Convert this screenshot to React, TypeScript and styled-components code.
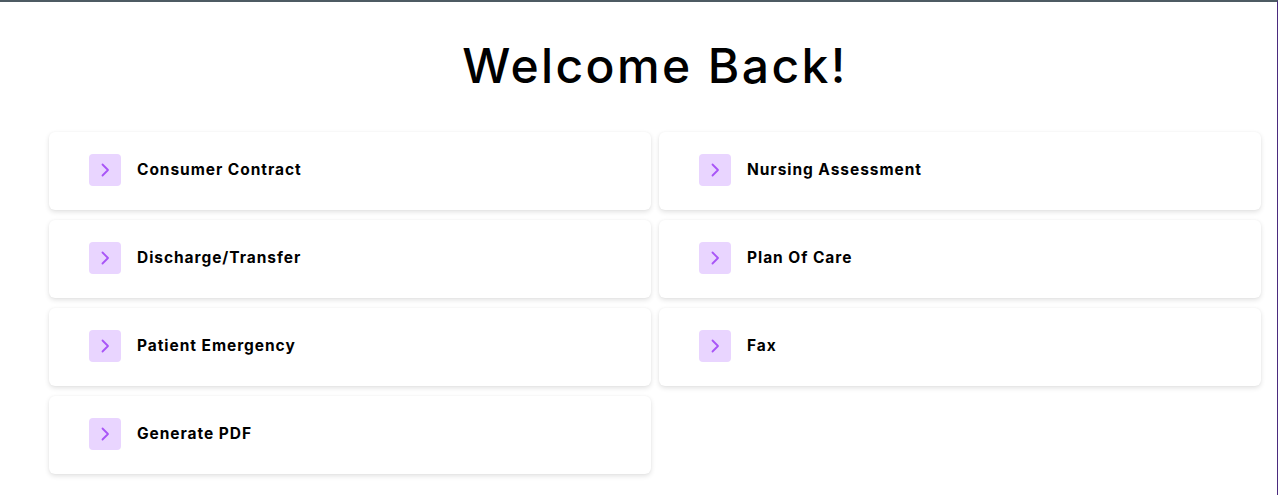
import React from "react";
import styled, { createGlobalStyle } from "styled-components";

const Global = createGlobalStyle`
  html, body { margin: 0; padding: 0; background: #fff; }
  body { font-family: "Inter", "Liberation Sans", sans-serif; }
`;

const Frame = styled.div`
  box-sizing: border-box;
  width: 1278px;
  height: 495px;
  border-top: 2px solid #4d5b63;
  border-right: 1px solid #4b2b7f;
  background: #fff;
  padding: 0 16px 0 49px;
  overflow: hidden;
`;

const Title = styled.h1`
  margin: 0;
  padding-top: 34px;
  height: 97px;
  box-sizing: border-box;
  text-align: center;
  font-family: "Inter", sans-serif;
  font-weight: 500;
  font-size: 48px;
  line-height: 60px;
  color: #000;
  letter-spacing: 2.4px;
`;

const Grid = styled.div`
  display: grid;
  grid-template-columns: 1fr 1fr;
  column-gap: 8px;
  row-gap: 10px;
  margin-top: 33px;
`;

const Card = styled.div`
  height: 78px;
  background: #fff;
  border-radius: 6px;
  box-shadow: 0 2px 5px rgba(0, 0, 0, 0.12), 0 0 2px rgba(0, 0, 0, 0.04);
  display: flex;
  align-items: center;
  padding-left: 40px;
  padding-bottom: 3px;
  box-sizing: border-box;
  gap: 16px;
  cursor: pointer;
`;

const IconBox = styled.div`
  width: 32px;
  height: 32px;
  border-radius: 4px;
  background: #e9d5ff;
  display: flex;
  align-items: center;
  justify-content: center;
`;

const Label = styled.span`
  font-family: "Inter", sans-serif;
  font-weight: 700;
  font-size: 15.5px;
  color: #000;
  letter-spacing: 0.95px;
`;

const Chevron = () => (
  <svg width="10" height="16" viewBox="0 0 10 16">
    <path d="M2.5 2.5 L8 8 L2.5 13.5" fill="none" stroke="#a855f7" strokeWidth="1.8" strokeLinecap="round" strokeLinejoin="round" />
  </svg>
);

const items = [
  "Consumer Contract",
  "Nursing Assessment",
  "Discharge/Transfer",
  "Plan Of Care",
  "Patient Emergency",
  "Fax",
  "Generate PDF",
];

export default function App() {
  return (
    <>
      <Global />
      <Frame>
        <Title>Welcome Back!</Title>
        <Grid>
          {items.map((t) => (
            <Card key={t}>
              <IconBox>
                <Chevron />
              </IconBox>
              <Label>{t}</Label>
            </Card>
          ))}
        </Grid>
      </Frame>
    </>
  );
}
